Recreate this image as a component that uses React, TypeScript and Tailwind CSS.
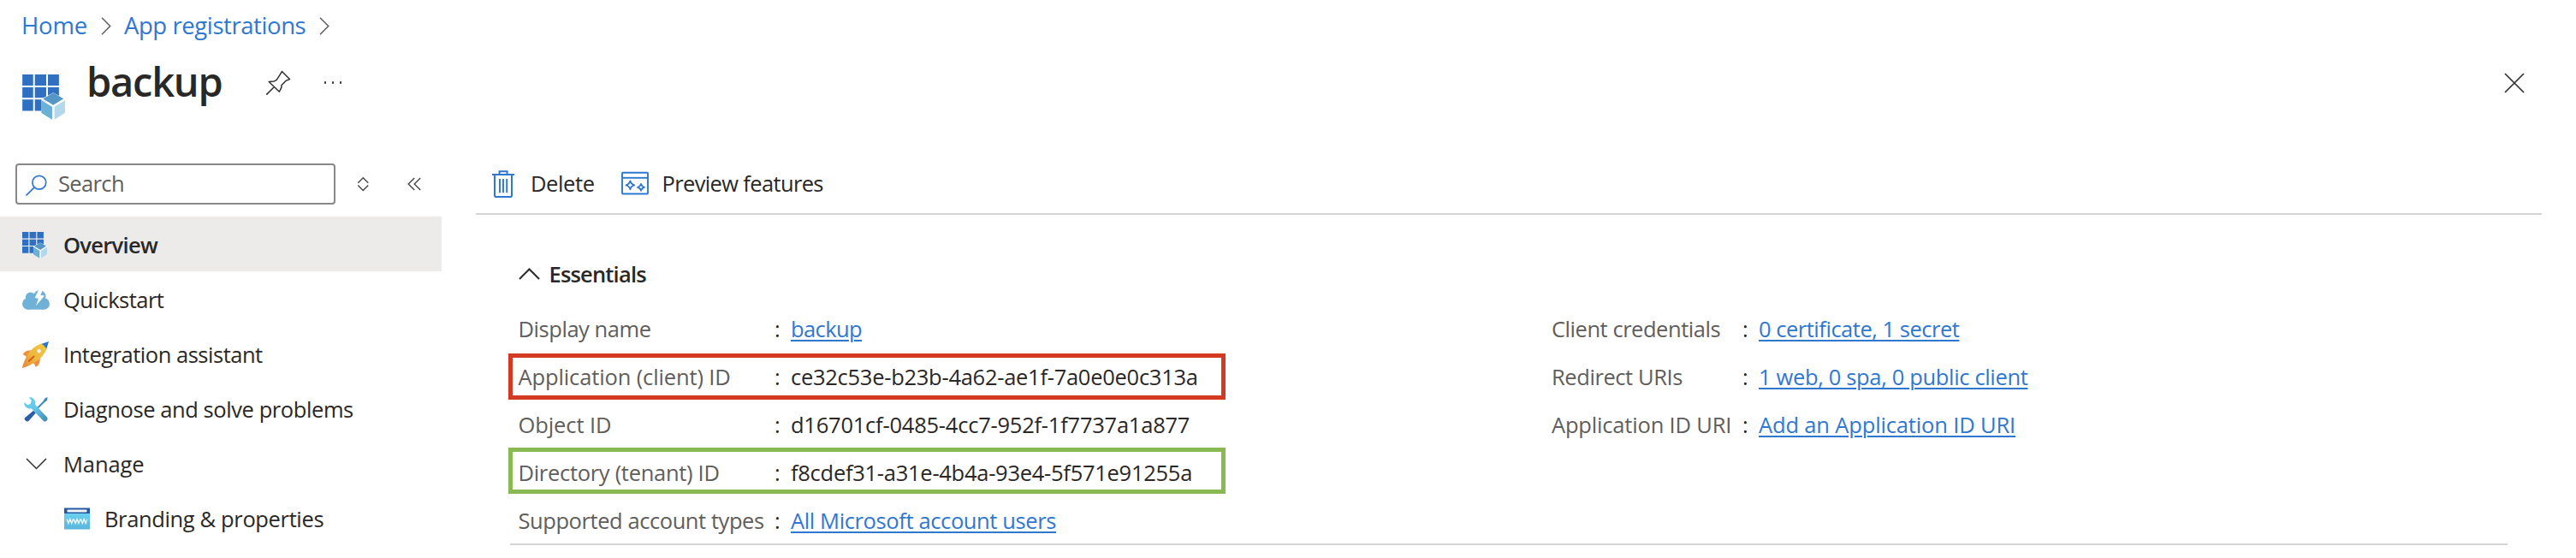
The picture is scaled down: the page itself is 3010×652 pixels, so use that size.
import type { ReactNode } from "react";

type IconProps = { className?: string };

function AppIcon({ className }: IconProps) {
  return (
    <svg viewBox="48 51 150 160" className={className}>
      <g fill="#2f70c2">
        <path d="M48 51h38v39H48zM92 51h40v39H92zM138 51h39v39H138zM48 96h38v37H48zM92 96h40v37H92zM138 96h39v37H138zM48 139h38v40H48zM92 139h40v40H92z" />
      </g>
      <path d="M157 115l42 22v50l-42 24-42-24v-50z" fill="#fff" fillOpacity="0.85" />
      <path d="M157 116l36 20-36 23-36-22z" fill="#5496c5" />
      <path d="M115 142l38 23v45l-38-23z" fill="#6bb0d7" />
      <path d="M198 142l-37 23v45l37-23z" fill="#b4d8eb" />
    </svg>
  );
}

function CloudIcon({ className }: IconProps) {
  return (
    <svg viewBox="75 506 93 70" className={className}>
      <g fill="#6fb1d7">
        <circle cx="94.500" cy="555.500" r="19.500" />
        <circle cx="103" cy="533" r="17" />
        <circle cx="134" cy="530" r="21" />
        <circle cx="148.500" cy="555.500" r="19.500" />
        <path d="M94 526h54v49H94z" />
      </g>
      <path d="M132 504l-14 31 12 3-9 25 30-35-14-2 10-22z" fill="#fff" />
    </svg>
  );
}

function RocketIcon({ className }: IconProps) {
  return (
    <svg viewBox="31 208 94 94" className={className}>
      <defs>
        <linearGradient id="rocket-body" x1="0" y1="1" x2="1" y2="0">
          <stop offset="0" stopColor="#e8813a" />
          <stop offset="0.45" stopColor="#eeb83c" />
          <stop offset="1" stopColor="#f0c93e" />
        </linearGradient>
      </defs>
      <path d="M33 255c5-12 17-17 32-14l-16 27c-3-7-8-11-16-13zM78 299c12-5 18-18 15-34l-26 17c6 4 10 9 11 17z" fill="#ec8f3f" />
      <path d="M101 215c-22 7-45 23-58 52-5 11-10 22-12 35 13-3 25-8 36-15 26-14 43-32 51-54z" fill="url(#rocket-body)" />
      <path d="M125 208l-25 8c6 4 13 11 17 18z" fill="#2f72c9" />
      <circle cx="90.500" cy="242" r="8" fill="#f3f3f3" stroke="#d5a52f" strokeWidth="1.500" />
      <path d="M55 277l17-16" stroke="#cf5f1d" strokeWidth="6" strokeLinecap="round" />
    </svg>
  );
}

function ToolsIcon({ className }: IconProps) {
  return (
    <svg viewBox="37 404 83 86" className={className}>
      <defs>
        <linearGradient id="wrench" x1="0" y1="0" x2="1" y2="1">
          <stop offset="0" stopColor="#6fd3f2" />
          <stop offset="0.5" stopColor="#62c3e6" />
          <stop offset="1" stopColor="#3b86ad" />
        </linearGradient>
      </defs>
      <path d="M119 404l-9 4-7 11-25 25 4 4 25-25 10-8z" fill="#3f87b5" />
      <path d="M70 451l8 8-25 28c-6 5-17-5-13-11z" fill="#2a5ea8" />
      <path d="M54 405c14-2 25 9 21 24l42 45c6 8-5 19-12 13l-43-44c-14 4-26-7-24-21l11 9 11-3 3-12z" fill="url(#wrench)" />
    </svg>
  );
}

function BrandingIcon({ className }: IconProps) {
  return (
    <svg viewBox="0 0 30 26" className={className}>
      <defs>
        <linearGradient id="site" x1="0" y1="0" x2="0" y2="1">
          <stop offset="0" stopColor="#6bd0f0" />
          <stop offset="1" stopColor="#59b6dc" />
        </linearGradient>
      </defs>
      <path d="M0 .5h30V7H0z" fill="#2459a6" />
      <rect x="3.500" y="2.500" width="23" height="3" rx="0.800" fill="#f2f2f2" />
      <path d="M0 7h30v18.500H0z" fill="url(#site)" />
      <path d="M3 13.500l1.900 5 1.900-5 1.900 5 1.900-5M11.200 13.500l1.900 5 1.900-5 1.900 5 1.900-5M19.400 13.500l1.900 5 1.900-5 1.900 5 1.900-5" fill="none" stroke="#fff" strokeWidth="1.200" />
    </svg>
  );
}

function PinIcon({ className }: IconProps) {
  return (
    <svg viewBox="310 82 30 30" className={className} fill="none" stroke="#323130" strokeWidth="1.500" strokeLinejoin="round">
      <path d="M329.500 83.500l9 9-4.500 1.900-5 5.200-.2 2.700-2.400 4.900-12.200-11.700 6.300-.6 2.700-1.600 3.900-6zM320.200 101.700l-8.900 8.900" />
    </svg>
  );
}

function SearchIcon({ className }: IconProps) {
  return (
    <svg viewBox="30 203 25 25" className={className} fill="none" stroke="#2f78d0" strokeWidth="1.700">
      <circle cx="45.800" cy="212.200" r="7.900" />
      <path d="M40.200 217.800l-9.700 9.700" />
    </svg>
  );
}

function SortIcon({ className }: IconProps) {
  return (
    <svg viewBox="417 206 15 18" className={className} fill="none" stroke="#484644" strokeWidth="1.400">
      <path d="M418.300 213.700l6-6 6 6M418.300 216.500l6 6 6-6" />
    </svg>
  );
}

function CollapseIcon({ className }: IconProps) {
  return (
    <svg viewBox="476 208 16 16" className={className} fill="none" stroke="#484644" strokeWidth="1.400">
      <path d="M484.200 209l-7 7 7 7M491.200 209l-7 7 7 7" />
    </svg>
  );
}

function TrashIcon({ className }: IconProps) {
  return (
    <svg viewBox="575 196 26 33" className={className} fill="none" stroke="#2f78d0" strokeWidth="2">
      <path d="M575 202h26M583.600 201.500v-3.300h9v3.300M578 202v24.200q0 1.800 1.800 1.800h16.400q1.800 0 1.800-1.800V202" />
      <path d="M584 207v16.200M588 207v16.200M592.200 207v16.200" strokeWidth="1.900" />
    </svg>
  );
}

function PreviewIcon({ className }: IconProps) {
  return (
    <svg viewBox="726 199 32 28" className={className} fill="none" stroke="#2f78d0" strokeWidth="1.900">
      <rect x="727" y="200.700" width="30" height="24.800" rx="0.800" />
      <path d="M727 206.800h30" />
      <path d="M736.400 210.300q.9 4.100 5 5q-4.100.9-5 5q-.9-4.100-5-5q4.100-.9 5-5zM749 213.800q.7 3.200 4 4q-3.300.8-4 4q-.7-3.200-4-4q3.300-.8 4-4z" strokeWidth="1.700" strokeLinejoin="round" />
    </svg>
  );
}

function Chevron({ className, d, box, width = 1.5 }: IconProps & { d: string; box: string; width?: number }) {
  return (
    <svg viewBox={box} className={className} fill="none" stroke="currentColor" strokeWidth={width}>
      <path d={d} />
    </svg>
  );
}

type NavItemProps = { icon: ReactNode; label: string; textClass?: string; rowClass?: string };

function NavItem({ icon, label, textClass = "", rowClass = "" }: NavItemProps) {
  return (
    <li className={`flex h-16 items-center pt-0.5 ${rowClass}`}>
      {icon}
      <span className={`ml-px ${textClass}`}>{label}</span>
    </li>
  );
}

type FieldProps = {
  label: string;
  labelClass: string;
  value: string;
  valueClass: string;
  link?: boolean;
  children?: ReactNode;
};

function Field({ label, labelClass, value, valueClass, link, children }: FieldProps) {
  return (
    <div className="relative flex h-14 items-center">
      <dt className={`text-[#605e5c] ${labelClass}`}>{label}</dt>
      <span className="w-[19px]">:</span>
      <dd>
        {link ? (
          <a className={`text-[#2f78d0] underline decoration-2 underline-offset-[3px] ${valueClass}`}>{value}</a>
        ) : (
          <span className={valueClass}>{value}</span>
        )}
      </dd>
      {children}
    </div>
  );
}

export default function App() {
  return (
    <div className="h-[652px] w-[3010px] overflow-hidden bg-white font-['Open_Sans',sans-serif] text-[25.5px] leading-[34px] whitespace-nowrap text-[#292827]">
      <header>
        <nav className="flex h-[60px] items-center pl-[25px] text-[27.5px] text-[#2f78d0]">
          <a className="tracking-[-0.18px]">Home</a>
          <Chevron className="ml-[16px] h-[21px] w-3 text-[#605e5c]" box="0 0 12 21" d="M1 .8l9.700 9.700L1 20.200" />
          <a className="ml-[15px] tracking-[-0.42px]">App registrations</a>
          <Chevron className="ml-4 h-[21px] w-3 text-[#605e5c]" box="0 0 12 21" d="M1 .8l9.700 9.700L1 20.200" />
        </nav>
        <div className="flex h-[131px] items-start pl-[26px]">
          <AppIcon className="mt-[27px] h-[53px] w-[50px]" />
          <h1 className="ml-[25px] text-[47px] leading-[70px] font-semibold tracking-[-1.23px]">backup</h1>
          <PinIcon className="mt-[22px] ml-[50px] h-[30px] w-[30px]" />
          <span className="mt-[35px] ml-[39px] flex gap-[6.500px]">
            <i className="size-[2.500px] rounded-full bg-[#323130]" />
            <i className="size-[2.500px] rounded-full bg-[#323130]" />
            <i className="size-[2.500px] rounded-full bg-[#323130]" />
          </span>
          <Chevron className="mt-[25px] mr-[60px] ml-auto size-6 text-[#323130]" box="0 0 24 24" d="M1 1l22 22M23 1L1 23" width={1.7} />
        </div>
      </header>

      <div className="flex">
        <aside className="w-[516px]">
          <div className="flex h-12 items-center">
            <label className="ml-[18px] flex h-12 w-[374px] items-center rounded-[4px] border-2 border-[#8a8886] pb-0.5 pl-2.5 text-[#605e5c]">
              <SearchIcon className="mt-1 size-[25px]" />
              <span className="ml-[13px] tracking-[-0.63px]">Search</span>
            </label>
            <SortIcon className="ml-[25px] h-[18px] w-[15px]" />
            <CollapseIcon className="ml-11 size-4" />
          </div>
          <ul className="mt-3.5">
            <NavItem icon={<AppIcon className="mr-[18px] ml-[26px] h-[31px] w-[29px]" />} label="Overview" textClass="font-semibold tracking-[-0.7px]" rowClass="bg-[#edebe9]" />
            <NavItem icon={<CloudIcon className="mr-[15px] ml-[26px] h-6 w-8" />} label="Quickstart" textClass="tracking-[-0.5px]" />
            <NavItem icon={<RocketIcon className="mr-4 ml-[26px] size-[31px]" />} label="Integration assistant" textClass="tracking-[-0.48px]" />
            <NavItem icon={<ToolsIcon className="mr-[17px] ml-7 h-[29px] w-7" />} label="Diagnose and solve problems" textClass="tracking-[-0.42px]" />
            <NavItem icon={<Chevron className="mr-[18px] ml-[30px] h-3.5 w-[25px] text-[#323130]" box="0 0 25 14" d="M1 1l11.500 11.500L24 1" />} label="Manage" textClass="tracking-[-0.1px]" />
            <NavItem icon={<BrandingIcon className="mr-4 ml-[75px] h-[26px] w-[30px]" />} label="Branding & properties" textClass="tracking-[-0.36px]" />
          </ul>
        </aside>

        <main className="ml-10 w-[2414px]">
          <div className="flex h-[60px] items-center border-b-2 border-[#d6d5d4] pb-3 pl-[19px]">
            <TrashIcon className="h-[33px] w-[26px]" />
            <span className="ml-[19px] tracking-[-0.4px]">Delete</span>
            <PreviewIcon className="ml-[31px] h-7 w-8" />
            <span className="ml-4 tracking-[-0.65px]">Preview features</span>
          </div>
          <section className="ml-10 w-[2334px]">
            <h2 className="mt-[51px] flex h-9 items-center pl-2.5 font-semibold">
              <Chevron className="h-3.5 w-[25px] text-[#323130]" box="0 0 25 14" d="M1 13L12.500 1.500L24 13" width={2.2} />
              <span className="ml-[10.500px] tracking-[-0.82px]">Essentials</span>
            </h2>
            <div className="mt-[18px] flex h-[281px] border-b-2 border-[#d6d5d4] pl-[9.500px]">
              <dl className="w-[1207.500px]">
                <Field label="Display name" labelClass="w-[299.500px] tracking-[-0.45px]" value="backup" valueClass="tracking-[-0.6px]" link />
                <Field label="Application (client) ID" labelClass="w-[299.500px] tracking-[-0.13px]" value="ce32c53e-b23b-4a62-ae1f-7a0e0e0c313a" valueClass="tracking-[-0.27px]">
                  <span className="absolute top-px -left-[11.500px] h-[54px] w-[838px] border-[5px] border-[#d43a22]" />
                </Field>
                <Field label="Object ID" labelClass="w-[299.500px] tracking-[-0.1px]" value="d16701cf-0485-4cc7-952f-1f7737a1a877" valueClass="tracking-[-0.23px]" />
                <Field label="Directory (tenant) ID" labelClass="w-[299.500px] tracking-[-0.3px]" value="f8cdef31-a31e-4b4a-93e4-5f571e91255a" valueClass="tracking-[-0.27px]">
                  <span className="absolute -top-px -left-[12px] h-[54px] w-[838.500px] border-[5px] border-[#89b953]" />
                </Field>
                <Field label="Supported account types" labelClass="w-[299.500px] tracking-[-0.43px]" value="All Microsoft account users" valueClass="tracking-[-0.38px]" link />
              </dl>
              <dl>
                <Field label="Client credentials" labelClass="w-[223px] tracking-[-0.46px]" value="0 certificate, 1 secret" valueClass="tracking-[-0.48px]" link />
                <Field label="Redirect URIs" labelClass="w-[223px] tracking-[-0.42px]" value="1 web, 0 spa, 0 public client" valueClass="tracking-[-0.34px]" link />
                <Field label="Application ID URI" labelClass="w-[223px] tracking-[-0.18px]" value="Add an Application ID URI" valueClass="tracking-[-0.15px]" link />
              </dl>
            </div>
          </section>
        </main>
      </div>
    </div>
  );
}
